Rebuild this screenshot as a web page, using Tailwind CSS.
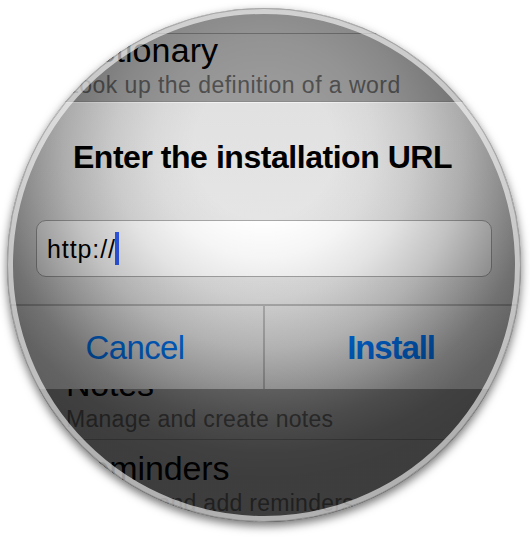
<!DOCTYPE html>
<html lang="en">
<head>
<meta charset="utf-8">
<title>Install</title>
<script src="https://cdn.jsdelivr.net/npm/@tailwindcss/browser@4"></script>
</head>
<body class="h-[538px] w-[530px] overflow-hidden bg-white font-['Liberation_Sans',sans-serif] text-black">
<main class="relative mt-[8px] ml-[7px] flex h-[514px] w-[514px] flex-col overflow-hidden rounded-full bg-[#999] shadow-[0_4px_10px_rgba(0,0,0,0.55)]">
  <!-- List behind the dialog, upper part -->
  <section class="h-[94px] shrink-0 overflow-hidden border-b border-[#8a8a8a] whitespace-nowrap">
    <div class="h-[26px] border-b border-[#707070]"></div>
    <div class="pl-[59px]">
      <h2 class="h-[34px] text-[34px] leading-[32px] tracking-[0.1px]">Dictionary</h2>
      <p class="h-[30px] text-[23px] leading-[34px] tracking-[0.47px] text-[#505050]">Look up the definition of a word</p>
    </div>
  </section>
  <!-- Dialog -->
  <section class="flex h-[287px] shrink-0 flex-col border-t border-[#f2f2f2] bg-linear-to-b from-[#e1e1e1] to-[#ebebeb] whitespace-nowrap">
    <h1 class="h-[117px] pt-[34px] pr-[3px] text-center text-[32px] leading-[41px] font-bold tracking-[-0.46px]">Enter the installation URL</h1>
    <div class="ml-[29px] flex h-[57px] w-[456px] items-center rounded-[10px] border border-[#a8a8a8] bg-white pl-[10px]">
      <span class="text-[25px] leading-[30px] tracking-[0.9px]">http://</span><span class="-ml-px h-[33px] w-[4px] bg-[#3360ff]"></span>
    </div>
    <div class="mt-[27px] flex h-[85px] border-t-2 border-[#b8b8b8] text-[33px] leading-[84px] text-[#007aff]">
      <div class="w-[256px] text-center tracking-[-0.6px]">Cancel</div>
      <div class="w-[2px] bg-[#bcbcbc]"></div>
      <div class="w-[256px] pr-[4px] text-center font-bold tracking-[-1.1px]">Install</div>
    </div>
  </section>
  <!-- List behind the dialog, lower part -->
  <section class="h-[133px] shrink-0 overflow-hidden pl-[59px] whitespace-nowrap">
    <h2 class="mt-[-22px] h-[34px] text-[34px] leading-[34px] tracking-[-0.2px]">Notes</h2>
    <p class="h-[38px] text-[23px] leading-[36px] tracking-[0.28px] text-[#505050]">Manage and create notes</p>
    <div class="ml-[-59px] h-px bg-[#777]"></div>
    <h2 class="mt-[10px] h-[36px] text-[34px] leading-[36px] tracking-[-0.1px]">Reminders</h2>
    <p class="text-[23px] leading-[35px] tracking-[0.28px] text-[#505050]">Manage and add reminders</p>
  </section>
  <!-- Lens shading and rim -->
  <div class="absolute inset-0 bg-[radial-gradient(circle_at_257px_140px,transparent_70px,rgba(0,0,0,0.04)_110px,rgba(0,0,0,0.11)_150px,rgba(0,0,0,0.24)_200px,rgba(0,0,0,0.38)_240px,rgba(0,0,0,0.51)_275px,rgba(0,0,0,0.58)_305px,rgba(0,0,0,0.6)_330px)]"></div>
  <div class="absolute inset-0 rounded-full border-[6px] border-white/60"></div>
  <div class="absolute inset-0 rounded-full border border-black/20"></div>
</main>
</body>
</html>
